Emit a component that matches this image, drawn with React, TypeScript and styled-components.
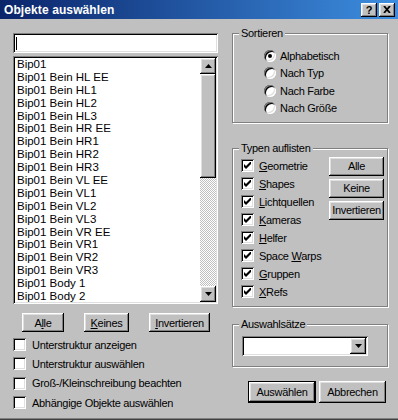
import React from "react";
import styled, { createGlobalStyle } from "styled-components";

const GlobalStyle = createGlobalStyle`
  html, body {
    margin: 0;
    padding: 0;
    background: #c0c0c0;
  }
  body {
    font-family: "Liberation Sans", Arial, sans-serif;
    font-size: 11px;
    letter-spacing: -0.3px;
    color: #000;
  }
`;

// win9x bevels
const raised = `box-shadow: inset -1px -1px #000, inset 1px 1px #fff, inset -2px -2px #808080, inset 2px 2px #dfdfdf;`;
const sunken = `box-shadow: inset 1px 1px #808080, inset -1px -1px #fff, inset 2px 2px #000, inset -2px -2px #dfdfdf;`;

const Window = styled.div`
  width: 398px;
  height: 420px;
  background: #c0c0c0;
  display: flex;
  flex-direction: column;
  overflow: hidden;
  box-shadow: inset 0 -1px #404040, inset 0 -2px #808080;
`;

const TitleBar = styled.div`
  height: 19px;
  display: flex;
  align-items: center;
  padding: 0 3px 0 4px;
  background: linear-gradient(to right, #0a246a, #3d8ee0);
`;

const Title = styled.div`
  flex: 1;
  color: #fff;
  font-weight: bold;
  font-size: 12px;
  letter-spacing: 0.1px;
`;

const TitleButtons = styled.div`
  display: flex;
  gap: 2px;
`;

const TitleButton = styled.div`
  width: 16px;
  height: 14px;
  background: #c0c0c0;
  ${raised}
  display: flex;
  align-items: center;
  justify-content: center;
  font-weight: bold;
  font-size: 11px;
  line-height: 14px;
  letter-spacing: 0;
`;

const Body = styled.div`
  display: flex;
  padding: 0 0 0 13px;
`;

const LeftColumn = styled.div`
  width: 205px;
  padding-top: 14px;
  display: flex;
  flex-direction: column;
`;

const RightColumn = styled.div`
  width: 156px;
  margin-left: 14px;
  padding-top: 8px;
  display: flex;
  flex-direction: column;
`;

const TextField = styled.div`
  height: 20px;
  background: #fff;
  ${sunken}
  display: flex;
  align-items: center;
  padding-left: 3px;
`;

const Caret = styled.span`
  width: 1px;
  height: 13px;
  background: #000;
`;

const ListBox = styled.div`
  margin-top: 3px;
  height: 248px;
  box-sizing: border-box;
  padding: 2px;
  background: #fff;
  ${sunken}
  display: flex;
`;

const ListItems = styled.div`
  flex: 1;
  overflow: hidden;
  padding-left: 2px;
`;

const ListItem = styled.div`
  height: 12.9px;
  line-height: 12.9px;
  font-size: 11.5px;
  letter-spacing: 0;
  white-space: nowrap;
`;

const ScrollBar = styled.div`
  width: 16px;
  display: flex;
  flex-direction: column;
`;

const ScrollButton = styled.div`
  height: 16px;
  flex: none;
  background: #c0c0c0;
  ${raised}
  display: flex;
  align-items: center;
  justify-content: center;
`;

const Thumb = styled.div`
  height: 104px;
  background: #c0c0c0;
  ${raised}
`;

const Track = styled.div`
  flex: 1;
  background: repeating-conic-gradient(#fff 0 25%, #c0c0c0 0 50%) 0 0 / 2px 2px;
`;

const ButtonRow = styled.div`
  margin-top: 9px;
  display: flex;
  justify-content: space-between;
  padding: 0 8px 0 9px;
`;

const Button = styled.div<{ $w: number; $h?: number; $default?: boolean }>`
  width: ${(p) => p.$w}px;
  height: ${(p) => p.$h ?? 19}px;
  background: #c0c0c0;
  display: flex;
  align-items: center;
  justify-content: center;
  white-space: nowrap;
  ${(p) =>
    p.$default
      ? `box-shadow: inset 0 0 0 1px #000, inset -2px -2px #000, inset 2px 2px #fff, inset -3px -3px #808080, inset 3px 3px #dfdfdf;`
      : raised}
`;

const Key = styled.span`
  text-decoration: underline;
  text-underline-offset: 1px;
`;

const Text = styled.span`
  white-space: nowrap;
`;

const OptionList = styled.div`
  margin-top: 3px;
  display: flex;
  flex-direction: column;
`;

const CheckRow = styled.div<{ $h: number; $gap: number }>`
  height: ${(p) => p.$h}px;
  display: flex;
  align-items: center;
  gap: ${(p) => p.$gap}px;
`;

const CheckBox = styled.span`
  width: 13px;
  height: 13px;
  flex: none;
  background: #fff;
  ${sunken}
  display: flex;
  align-items: center;
  justify-content: center;
`;

const GroupBox = styled.fieldset<{ $mt?: number }>`
  margin: ${(p) => p.$mt ?? 0}px 0 0 0;
  padding: 0;
  min-width: 0;
  border: 1px solid #808080;
  box-shadow: inset 1px 1px #fff, 1px 1px #fff;
`;

const Legend = styled.legend`
  margin-left: 6px;
  padding: 0 2px;
  line-height: 13px;
  background: #c0c0c0;
`;

const RadioList = styled.div`
  padding: 7px 0 5px 31px;
`;

const RadioRow = styled.div`
  height: 17.5px;
  display: flex;
  align-items: center;
  gap: 4px;
`;

const Radio = styled.span<{ $on?: boolean }>`
  position: relative;
  flex: none;
  width: 12px;
  height: 12px;
  border-radius: 50%;
  background: #fff;
  ${sunken}
  &::after {
    content: "";
    display: ${(p) => (p.$on ? "block" : "none")};
    position: absolute;
    left: 4px;
    top: 4px;
    width: 4px;
    height: 4px;
    border-radius: 50%;
    background: #000;
  }
`;

const TypesBody = styled.div`
  display: flex;
  justify-content: space-between;
  padding: 2px 3px 5px 8px;
`;

const TypesList = styled.div`
  display: flex;
  flex-direction: column;
`;

const TypesButtons = styled.div`
  display: flex;
  flex-direction: column;
  gap: 3px;
`;

const ComboWrap = styled.div`
  padding: 5px 0 10px 9px;
`;

const Combo = styled.div`
  width: 126px;
  height: 20px;
  box-sizing: border-box;
  padding: 2px;
  background: #fff;
  ${sunken}
  display: flex;
  justify-content: flex-end;
`;

const ComboButton = styled(ScrollButton)`
  width: 16px;
`;

const DialogButtons = styled.div`
  margin-top: 14px;
  padding-right: 2px;
  display: flex;
  justify-content: flex-end;
  gap: 3px;
`;

const ArrowUp = () => (
  <svg width="7" height="4" viewBox="0 0 7 4">
    <path d="M3.5 0 L7 4 L0 4 Z" fill="#000" />
  </svg>
);

const ArrowDown = () => (
  <svg width="7" height="4" viewBox="0 0 7 4">
    <path d="M0 0 L7 0 L3.5 4 Z" fill="#000" />
  </svg>
);

const Check = () => (
  <svg width="7" height="7" viewBox="0 0 7 7">
    <path d="M0 2 L2 4 L7 -1 L7 2 L2 7 L0 5 Z" fill="#000" />
  </svg>
);

const CloseGlyph = () => (
  <svg width="8" height="7" viewBox="0 0 8 7">
    <path d="M1 0 L7 7 M7 0 L1 7" stroke="#000" strokeWidth="1.8" />
  </svg>
);

const label = (text: string, key?: number) => (
  <Text>
    {key === undefined ? (
      text
    ) : (
      <>
        {text.slice(0, key)}
        <Key>{text[key]}</Key>
        {text.slice(key + 1)}
      </>
    )}
  </Text>
);

const objects = [
  "Bip01",
  "Bip01 Bein HL EE",
  "Bip01 Bein HL1",
  "Bip01 Bein HL2",
  "Bip01 Bein HL3",
  "Bip01 Bein HR EE",
  "Bip01 Bein HR1",
  "Bip01 Bein HR2",
  "Bip01 Bein HR3",
  "Bip01 Bein VL EE",
  "Bip01 Bein VL1",
  "Bip01 Bein VL2",
  "Bip01 Bein VL3",
  "Bip01 Bein VR EE",
  "Bip01 Bein VR1",
  "Bip01 Bein VR2",
  "Bip01 Bein VR3",
  "Bip01 Body 1",
  "Bip01 Body 2",
];

const options = [
  "Unterstruktur anzeigen",
  "Unterstruktur auswählen",
  "Groß-/Kleinschreibung beachten",
  "Abhängige Objekte auswählen",
];

const sortModes = ["Alphabetisch", "Nach Typ", "Nach Farbe", "Nach Größe"];

const types: [string, number][] = [
  ["Geometrie", 0],
  ["Shapes", 0],
  ["Lichtquellen", 0],
  ["Kameras", 0],
  ["Helfer", 0],
  ["Space Warps", 6],
  ["Gruppen", 0],
  ["XRefs", 0],
];

export default function App() {
  return (
    <>
      <GlobalStyle />
      <Window>
        <TitleBar>
          <Title>Objekte auswählen</Title>
          <TitleButtons>
            <TitleButton>?</TitleButton>
            <TitleButton>
              <CloseGlyph />
            </TitleButton>
          </TitleButtons>
        </TitleBar>
        <Body>
          <LeftColumn>
            <TextField>
              <Caret />
            </TextField>
            <ListBox>
              <ListItems>
                {objects.map((o) => (
                  <ListItem key={o}>{o}</ListItem>
                ))}
              </ListItems>
              <ScrollBar>
                <ScrollButton>
                  <ArrowUp />
                </ScrollButton>
                <Thumb />
                <Track />
                <ScrollButton>
                  <ArrowDown />
                </ScrollButton>
              </ScrollBar>
            </ListBox>
            <ButtonRow>
              <Button $w={42}>{label("Alle", 1)}</Button>
              <Button $w={45}>{label("Keines", 0)}</Button>
              <Button $w={61}>{label("Invertieren", 0)}</Button>
            </ButtonRow>
            <OptionList>
              {options.map((o) => (
                <CheckRow key={o} $h={19.33} $gap={6}>
                  <CheckBox />
                  <Text>{o}</Text>
                </CheckRow>
              ))}
            </OptionList>
          </LeftColumn>
          <RightColumn>
            <GroupBox>
              <Legend>Sortieren</Legend>
              <RadioList>
                {sortModes.map((m, i) => (
                  <RadioRow key={m}>
                    <Radio $on={i === 0} />
                    <Text>{m}</Text>
                  </RadioRow>
                ))}
              </RadioList>
            </GroupBox>
            <GroupBox $mt={18.5}>
              <Legend>Typen auflisten</Legend>
              <TypesBody>
                <TypesList>
                  {types.map(([t, k]) => (
                    <CheckRow key={t} $h={18} $gap={5}>
                      <CheckBox>
                        <Check />
                      </CheckBox>
                      {label(t, k)}
                    </CheckRow>
                  ))}
                </TypesList>
                <TypesButtons>
                  <Button $w={55}>Alle</Button>
                  <Button $w={55}>Keine</Button>
                  <Button $w={55}>Invertieren</Button>
                </TypesButtons>
              </TypesBody>
            </GroupBox>
            <GroupBox $mt={11.5}>
              <Legend>Auswahlsätze</Legend>
              <ComboWrap>
                <Combo>
                  <ComboButton>
                    <ArrowDown />
                  </ComboButton>
                </Combo>
              </ComboWrap>
            </GroupBox>
            <DialogButtons>
              <Button $w={68} $h={22} $default>
                Auswählen
              </Button>
              <Button $w={67} $h={22}>
                Abbrechen
              </Button>
            </DialogButtons>
          </RightColumn>
        </Body>
      </Window>
    </>
  );
}
